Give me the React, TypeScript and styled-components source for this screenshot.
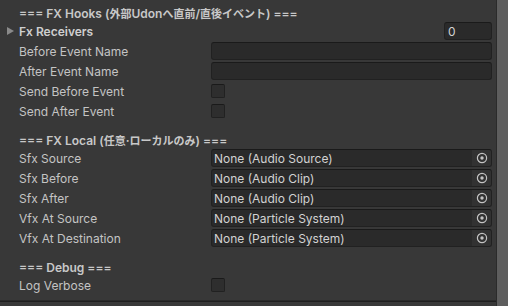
import React from "react";
import styled, { createGlobalStyle } from "styled-components";

const Global = createGlobalStyle`
  html, body { margin: 0; padding: 0; background: #383838; }
  body { font-family: Inter, "Noto Sans CJK JP", sans-serif; font-size: 12px; }
`;

const Window = styled.div`
  width: 508px;
  height: 306px;
  display: flex;
  overflow: hidden;
  background: #383838;
`;

const Content = styled.div`
  width: 496px;
  display: flex;
  flex-direction: column;
  border-right: 1px solid #2b2b2b;
`;

const Scrollbar = styled.div`
  flex: 1;
  background: #5e5e5e;
`;

const Header = styled.div<{ $top: number }>`
  padding: ${(p) => p.$top}px 0 0 19px;
  height: 15px;
  line-height: 15px;
  font-weight: 600;
  color: #c8c8c8;
  white-space: nowrap;
  font-family: Inter, "Noto Sans CJK JP", sans-serif;
`;

const Cjk = styled.span`
  font-family: "Noto Sans CJK JP", sans-serif;
  font-size: 11px;
  font-weight: 700;
`;

const Row = styled.div`
  height: 20px;
  display: flex;
  align-items: center;
  padding-left: 19px;
  padding-right: 4px;
`;

const Label = styled.div<{ $bold?: boolean }>`
  width: 192px;
  flex: none;
  color: ${(p) => (p.$bold ? "#cfcfcf" : "#c4c4c4")};
  font-weight: ${(p) => (p.$bold ? 600 : 400)};
  position: relative;
  white-space: nowrap;
`;

const Arrow = styled.span`
  position: absolute;
  left: -12px;
  top: 50%;
  margin-top: -4px;
  width: 0;
  height: 0;
  border-top: 4px solid transparent;
  border-bottom: 4px solid transparent;
  border-left: 7px solid #8a8a8a;
`;

const FieldBox = styled.div`
  box-sizing: border-box;
  height: 18px;
  border: 1px solid #212121;
  border-top-color: #1a1a1a;
  background: #2a2a2a;
  border-radius: 3px;
  color: #d2d2d2;
  display: flex;
  align-items: center;
  overflow: hidden;
`;

const TextField = styled(FieldBox)`
  width: 281px;
`;

const Spacer = styled.div`
  flex: 1;
`;

const IntField = styled(FieldBox)`
  width: 48px;
  padding-left: 3px;
`;

const ObjectField = styled(FieldBox)`
  width: 281px;
  padding-left: 2px;
`;

const ObjText = styled.span`
  flex: 1;
  white-space: nowrap;
`;

const Picker = styled.div`
  width: 19px;
  height: 100%;
  background: #323232;
  display: flex;
  align-items: center;
  justify-content: center;
`;

const Checkbox = styled.div`
  box-sizing: border-box;
  width: 14px;
  height: 14px;
  border: 1px solid #212121;
  border-top-color: #1a1a1a;
  background: #2e2e2e;
  border-radius: 2px;
`;

const Footer = styled.div`
  margin-top: auto;
  margin-bottom: 4px;
  border-bottom: 1px solid #1f1f1f;
  height: 1px;
  background: #2a2a2a;
`;

const PickerIcon = () => (
  <svg width="12" height="12" viewBox="0 0 12 12">
    <circle cx="6" cy="6" r="4.6" fill="none" stroke="#c4c4c4" strokeWidth="1.2" />
    <circle cx="6" cy="6" r="1.7" fill="#c4c4c4" />
  </svg>
);

const ObjRow = ({ label, value }: { label: string; value: string }) => (
  <Row>
    <Label>{label}</Label>
    <ObjectField>
      <ObjText>{value}</ObjText>
      <Picker>
        <PickerIcon />
      </Picker>
    </ObjectField>
  </Row>
);

export default function App() {
  return (
    <>
      <Global />
      <Window>
        <Content>
          <Header $top={6}>
            === FX Hooks (<Cjk>外部</Cjk>Udon<Cjk>へ直前</Cjk>/<Cjk>直後イベント</Cjk>) ===
          </Header>
          <Row>
            <Label $bold>
              <Arrow />
              Fx Receivers
            </Label>
            <Spacer />
            <IntField>0</IntField>
          </Row>
          <Row>
            <Label>Before Event Name</Label>
            <TextField />
          </Row>
          <Row>
            <Label>After Event Name</Label>
            <TextField />
          </Row>
          <Row>
            <Label>Send Before Event</Label>
            <Checkbox />
          </Row>
          <Row>
            <Label>Send After Event</Label>
            <Checkbox />
          </Row>
          <Header $top={12}>
            === FX Local (<Cjk>任意</Cjk>·<Cjk>ローカルのみ</Cjk>) ===
          </Header>
          <ObjRow label="Sfx Source" value="None (Audio Source)" />
          <ObjRow label="Sfx Before" value="None (Audio Clip)" />
          <ObjRow label="Sfx After" value="None (Audio Clip)" />
          <ObjRow label="Vfx At Source" value="None (Particle System)" />
          <ObjRow label="Vfx At Destination" value="None (Particle System)" />
          <Header $top={12}>=== Debug ===</Header>
          <Row>
            <Label>Log Verbose</Label>
            <Checkbox />
          </Row>
          <Footer />
        </Content>
        <Scrollbar />
      </Window>
    </>
  );
}
